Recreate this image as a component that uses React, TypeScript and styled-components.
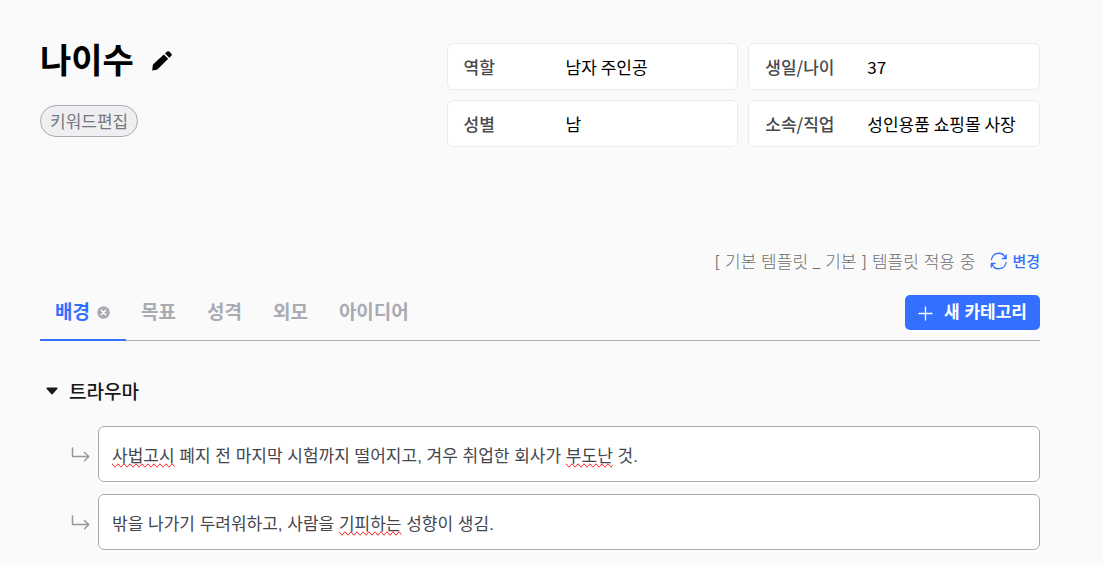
import React from "react";
import styled, { createGlobalStyle } from "styled-components";

const GlobalStyle = createGlobalStyle`
  *, *::before, *::after { box-sizing: border-box; }
  body {
    margin: 0;
    background: #fafafa;
    color: #000;
    font-family: "Noto Sans CJK KR", "Noto Sans", sans-serif;
    font-size: 17px;
    line-height: 24px;
  }
  button, input, textarea { font: inherit; color: inherit; margin: 0; }
  button { cursor: pointer; }
`;

const Page = styled.main`
  padding: 43px 63px 15px 40px;
`;

const Header = styled.header`
  display: grid;
  grid-template-columns: minmax(0, 2fr) minmax(0, 3fr);
  column-gap: 11px;
  align-items: start;
`;

const TitleRow = styled.div`
  display: flex;
  align-items: center;
  gap: 17px;
  height: 36px;
`;

const Title = styled.h1`
  margin: 0;
  padding-bottom: 4px;
  font-size: 34px;
  line-height: 34px;
  font-weight: 700;
`;

const IconButton = styled.button`
  display: inline-flex;
  padding: 0;
  border: 0;
  background: none;
`;

const KeywordButton = styled.button`
  margin-top: 26px;
  height: 32px;
  padding: 0 9px;
  border: 1px solid #a9abb2;
  border-radius: 16px;
  background: #eeeff1;
  color: #76787f;
  line-height: 30px;
`;

const InfoGrid = styled.div`
  display: grid;
  grid-template-columns: repeat(2, minmax(0, 1fr));
  gap: 10px;
`;

const InfoCard = styled.label`
  display: grid;
  grid-template-columns: 102px minmax(0, 1fr);
  align-items: center;
  height: 47px;
  padding: 0 16px;
  border: 1px solid #ebebeb;
  border-radius: 6px;
  background: #fff;
`;

const InfoLabel = styled.span`
  font-weight: 500;
  color: #4a4a50;
`;

const InfoInput = styled.input`
  width: 100%;
  padding: 0;
  border: 0;
  outline: 0;
  background: none;
`;

const TemplateBar = styled.div`
  display: flex;
  justify-content: flex-end;
  align-items: center;
  gap: 15px;
  height: 24px;
  margin-top: 102px;
  color: #707070;
  font-weight: 300;
`;

const TemplateStatus = styled.span`
  padding-top: 2px;
  font-family: Inter, "Noto Sans CJK KR", sans-serif;
`;

const ChangeButton = styled(IconButton)`
  align-items: center;
  gap: 4px;
  color: #3470ff;
  font-size: 15px;
  font-weight: 500;
`;

const TabBar = styled.div`
  display: flex;
  justify-content: space-between;
  align-items: flex-start;
  height: 46px;
  margin-top: 22px;
  border-bottom: 1px solid #a9abb2;
`;

const TabList = styled.div`
  display: flex;
`;

const Tab = styled.div<{ $active?: boolean }>`
  display: flex;
  align-items: center;
  gap: 7px;
  height: 46px;
  padding: 0 16px 10px 15px;
  border-bottom: 2px solid ${(p) => (p.$active ? "#3470ff" : "transparent")};
  color: ${(p) => (p.$active ? "#3470ff" : "#a9abb2")};
`;

const TabButton = styled(IconButton)`
  padding-bottom: 2px;
  font-size: 19px;
  font-weight: 700;
`;

const AddButton = styled.button`
  display: flex;
  align-items: center;
  gap: 11px;
  height: 35px;
  padding: 1px 13px 0;
  border: 0;
  border-radius: 5px;
  background: #3470ff;
  color: #fff;
  font-family: "Liberation Sans", "Noto Sans CJK KR", sans-serif;
  font-weight: 700;
`;

const SectionToggle = styled.button`
  display: flex;
  align-items: center;
  gap: 11px;
  padding: 0;
  border: 0;
  background: none;
  color: #17181a;
  font-size: 19px;
  font-weight: 500;
`;

const Section = styled.section`
  padding: 38px 0 0 6px;
`;

const SectionTitle = styled.h2`
  margin: 0 0 23px;
`;

const Entries = styled.div`
  display: grid;
  gap: 10px;
  padding-left: 25px;
`;

const Entry = styled.div`
  display: grid;
  grid-template-columns: 19px minmax(0, 1fr);
  column-gap: 8px;
  align-items: center;
`;

const EditorFrame = styled.div`
  position: relative;
  padding-bottom: 2px;
  background: #fff;
  font-family: "Liberation Sans", "Noto Sans CJK KR", sans-serif;
`;

const Editor = styled.input`
  display: block;
  width: 100%;
  height: 56px;
  padding: 0 13px;
  border: 1px solid #a9abb2;
  border-radius: 6px;
  outline: 0;
  background: #fff;
  color: #45464d;
`;

const SpellLayer = styled.div`
  position: absolute;
  inset: 0;
  padding: 19px 14px 0;
  overflow: hidden;
  white-space: pre;
  color: transparent;
  pointer-events: none;
`;

const Misspelled = styled.span`
  text-decoration-line: spelling-error;
`;

const PencilIcon = () => (
  <svg width="22" height="22" viewBox="0 0 22 22" fill="#000" aria-hidden="true">
    <path d="M1.2 20.6 1.8 15.6Q2 14.6 2.8 13.8L12.8 4.6 17.2 8.8 7.4 18.6Q6.6 19.4 5.6 19.7Z" />
    <path d="M14 3.5 16.2 1.6Q17.2.8 18.2 1.6L20.4 3.8Q21.2 4.8 20.4 5.7L18.3 7.7Z" />
  </svg>
);

const RefreshIcon = () => (
  <svg width="18" height="18" viewBox="0 0 18 18" fill="none" stroke="#3470ff" strokeWidth="1.3" strokeLinecap="round" strokeLinejoin="round" aria-hidden="true">
    <path d="M1.5 7.5A7.2 7.2 0 0 1 15.5 6.3M16.2 2.8V6.5H12.5" />
    <path d="M16 10.5A7.2 7.2 0 0 1 2 11.7M1.3 15.2V11.5H5" />
  </svg>
);

const CloseIcon = () => (
  <svg width="13" height="13" viewBox="0 0 13 13" aria-hidden="true">
    <circle cx="6.5" cy="6.5" r="6.3" fill="#a9abb2" />
    <path d="M4.3 4.3 8.7 8.7M8.7 4.3 4.3 8.7" stroke="#fff" strokeWidth="1.5" strokeLinecap="round" />
  </svg>
);

const PlusIcon = () => (
  <svg width="15" height="15" viewBox="0 0 15 15" stroke="#fff" strokeWidth="1.3" strokeLinecap="round" aria-hidden="true">
    <path d="M7.5 1V14M1 7.5H14" />
  </svg>
);

const CaretIcon = () => (
  <svg width="12" height="8" viewBox="0 0 12 8" fill="#17181a" aria-hidden="true">
    <path d="M1.2.5H10.8Q12.2.8 11.2 2L7 6.8Q6 7.8 5 6.8L.8 2Q-.2.8 1.2.5Z" />
  </svg>
);

const BranchIcon = () => (
  <svg width="19" height="16" viewBox="0 0 19 16" fill="none" stroke="#96989f" strokeWidth="1.5" strokeLinecap="round" strokeLinejoin="round" aria-hidden="true">
    <path d="M1.5 1V9.5H17.5M13.5 5.5 17.8 9.5 13.5 13.8" />
  </svg>
);

const info = [
  { label: "역할", value: "남자 주인공" },
  { label: "생일/나이", value: "37" },
  { label: "성별", value: "남" },
  { label: "소속/직업", value: "성인용품 쇼핑몰 사장" },
];

const tabs = ["배경", "목표", "성격", "외모", "아이디어"];

const entries = [
  {
    text: "사법고시 폐지 전 마지막 시험까지 떨어지고, 겨우 취업한 회사가 부도난 것.",
    misspelled: ["사법고시", "부도난"],
  },
  {
    text: "밖을 나가기 두려워하고, 사람을 기피하는 성향이 생김.",
    misspelled: ["기피하는"],
  },
];

function EntryField({ text, misspelled }: { text: string; misspelled: string[] }) {
  const [value, setValue] = React.useState(text);
  const parts = value.split(new RegExp(`(${misspelled.join("|")})`));
  return (
    <Entry>
      <BranchIcon />
      <EditorFrame>
        <Editor
          aria-label="트라우마"
          spellCheck={false}
          value={value}
          onChange={(e) => setValue(e.target.value)}
        />
        <SpellLayer aria-hidden="true">
          {parts.map((part, i) =>
            misspelled.includes(part) ? <Misspelled key={i}>{part}</Misspelled> : part
          )}
        </SpellLayer>
      </EditorFrame>
    </Entry>
  );
}

export default function App() {
  const [active, setActive] = React.useState(0);
  const [open, setOpen] = React.useState(true);
  return (
    <Page>
      <GlobalStyle />
      <Header>
        <div>
          <TitleRow>
            <Title>나이수</Title>
            <IconButton type="button" aria-label="이름 편집">
              <PencilIcon />
            </IconButton>
          </TitleRow>
          <KeywordButton type="button">키워드편집</KeywordButton>
        </div>
        <InfoGrid>
          {info.map((item) => (
            <InfoCard key={item.label}>
              <InfoLabel>{item.label}</InfoLabel>
              <InfoInput defaultValue={item.value} spellCheck={false} />
            </InfoCard>
          ))}
        </InfoGrid>
      </Header>

      <TemplateBar>
        <TemplateStatus>[ 기본 템플릿 _ 기본 ] 템플릿 적용 중</TemplateStatus>
        <ChangeButton type="button">
          <RefreshIcon />
          변경
        </ChangeButton>
      </TemplateBar>

      <TabBar>
        <TabList>
          {tabs.map((tab, i) => (
            <Tab key={tab} $active={i === active}>
              <TabButton type="button" onClick={() => setActive(i)}>
                {tab}
              </TabButton>
              {i === active && (
                <IconButton type="button" aria-label="카테고리 삭제">
                  <CloseIcon />
                </IconButton>
              )}
            </Tab>
          ))}
        </TabList>
        <AddButton type="button">
          <PlusIcon />새 카테고리
        </AddButton>
      </TabBar>

      <Section>
        <SectionTitle>
          <SectionToggle type="button" aria-expanded={open} onClick={() => setOpen(!open)}>
            <CaretIcon />
            트라우마
          </SectionToggle>
        </SectionTitle>
        {open && (
          <Entries>
            {entries.map((entry) => (
              <EntryField key={entry.text} {...entry} />
            ))}
          </Entries>
        )}
      </Section>
    </Page>
  );
}
